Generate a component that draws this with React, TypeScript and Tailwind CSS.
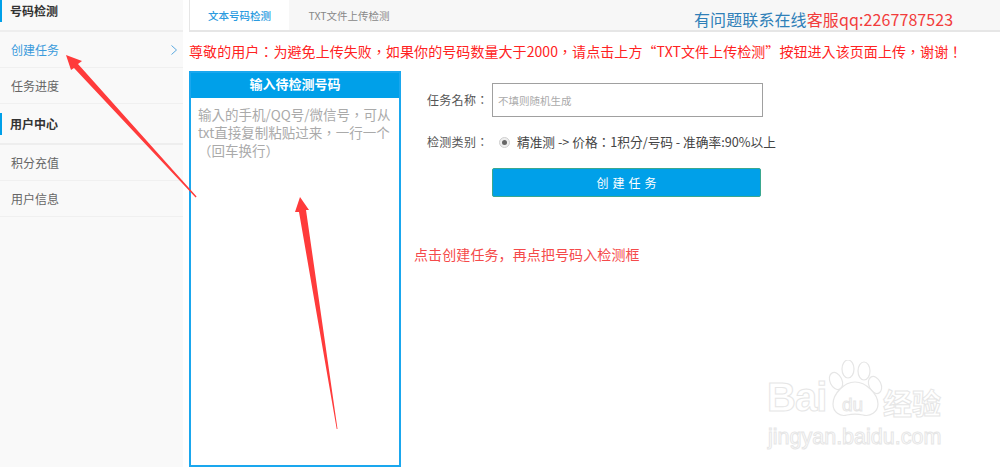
const font = '[font-family:"Noto_Sans_CJK_SC","Liberation_Sans",sans-serif]';
const fontTc = '[font-family:"Noto_Sans_CJK_TC","Liberation_Sans",sans-serif]';

function SideHead({ label, first }: { label: string; first?: boolean }) {
  return (
    <div className={`border-b-2 border-[#eeeeee] pb-[8px] ${first ? "" : "pt-[9px]"}`}>
      <div className="flex h-[22px] items-center border-l-2 border-[#00a0e9] pl-[8px] text-[12px] font-bold text-[#333333]">
        {label}
      </div>
    </div>
  );
}

function SideItem({ label, active }: { label: string; active?: boolean }) {
  return (
    <div
      className={`flex h-[36px] items-center justify-between border-b border-[#f0f0f0] pl-[11px] pr-[5px] text-[12px] ${
        active ? "text-[#3a9bdc]" : "text-[#666666]"
      }`}
    >
      {label}
      {active && (
        <svg width="8" height="12" viewBox="0 0 8 12" fill="none" stroke="#5aa9e0" strokeWidth="1">
          <path d="M1.5 1.5 6.5 6 1.5 10.5" />
        </svg>
      )}
    </div>
  );
}

function Arrows() {
  return (
    <svg className="absolute left-0 top-0" width="1000" height="467" viewBox="0 0 1000 467">
      <polygon fill="#ff3b3b" points="66,55 82,61 78,64 196.6,196.6 195.6,197.4 74,68 71,70" />
      <polygon fill="#ff3b3b" points="300,197 309,210 306,210 337.5,429 336.7,429 299,212 295,212" />
    </svg>
  );
}

function Watermark() {
  const outline = "text-white [-webkit-text-stroke:1px_#e6e6e6]";
  return (
    <div className="absolute left-[766px] top-[360px] h-[90px] w-[185px] [font-family:'Liberation_Sans',sans-serif]">
      <span className={`absolute left-[1px] top-[17px] text-[40px] font-bold leading-[40px] tracking-[-1px] ${outline}`}>Bai</span>
      <svg className="absolute left-0 top-0" width="185" height="90" viewBox="0 0 185 90" fill="#fff" stroke="#e6e6e6" strokeWidth="1.2">
        <ellipse cx="70" cy="21" rx="6" ry="9" transform="rotate(-25 70 21)" />
        <ellipse cx="82" cy="9" rx="6" ry="9" />
        <ellipse cx="98" cy="11" rx="6" ry="9" />
        <ellipse cx="109" cy="25" rx="6" ry="9" transform="rotate(-25 109 25)" />
        <path d="M67,44 C67,34 78,22 89,22 C100,22 112,34 112,44 C112,52 104,57 97,55 C92,54 86,54 81,55 C74,57 67,52 67,44z" />
      </svg>
      <span className={`absolute left-[76px] top-[33px] text-[19px] leading-[24px] ${outline}`}>du</span>
      <span className={`absolute left-[117px] top-[24px] text-[29px] font-bold leading-[36px] ${outline} ${font}`}>经验</span>
      <span className={`absolute left-[2px] top-[63px] text-[21.5px] leading-[28px] ${outline}`}>jingyan.baidu.com</span>
    </div>
  );
}

export default function App() {
  return (
    <div className={`relative flex h-[467px] w-[1000px] overflow-hidden bg-white ${font}`}>
      <aside className="w-[183px] shrink-0 bg-[#f9f9f9]">
        <SideHead label="号码检测" first />
        <SideItem label="创建任务" active />
        <SideItem label="任务进度" />
        <SideHead label="用户中心" />
        <SideItem label="积分充值" />
        <SideItem label="用户信息" />
      </aside>

      <main className="ml-[6px] flex min-w-0 flex-1 flex-col">
        <div className="flex h-[32px] shrink-0 items-stretch border-b-2 border-[#e6e6e6] bg-[#f7f7f7]">
          <div className="flex w-[100px] items-center justify-center border-l border-[#e6e6e6] bg-white pt-[1px] text-[10.5px] font-medium text-[#2b9be0]">
            文本号码检测
          </div>
          <div className="flex w-[120px] items-center justify-center pt-[1px] text-[10.5px] text-[#888888]">
            TXT文件上传检测
          </div>
          <div className="ml-[285px] flex items-end text-[16px] leading-[22px] tracking-[0.1px]">
            <span className="text-[#2f7fb8]">有问题联系在线</span>
            <span className="text-[#f23c3c]">客服qq:2267787523</span>
          </div>
        </div>

        <p className={`mt-[8px] h-[31px] whitespace-nowrap text-[14px] leading-[22px] tracking-[0.07px] text-[#ff2222] ${fontTc}`}>
          尊敬的用户：为避免上传失败，如果你的号码数量大于2000，请点击上方“TXT文件上传检测”按钮进入该页面上传，谢谢！
        </p>

        <div className="flex flex-1 min-h-0">
          <section className="flex w-[212px] shrink-0 flex-col border-2 border-[#1aa7ee]">
            <h2 className="flex h-[25px] shrink-0 items-center justify-center bg-[#00a0e9] pb-[3px] text-[13px] font-bold text-white">
              输入待检测号码
            </h2>
            <textarea
              readOnly
              className={`flex-1 resize-none px-[7px] py-[7px] text-[13.5px] leading-[18px] outline-none placeholder:text-[#aaaaaa] ${fontTc}`}
              placeholder="输入的手机/QQ号/微信号，可从txt直接复制粘贴过来，一行一个（回车换行）"
            />
          </section>

          <div className="pl-[13px]">
            <div className="pl-[13px] pt-[12px]">
              <div className="flex items-center">
                <label className={`w-[65px] text-[12px] tracking-[0.3px] text-[#555555] ${fontTc}`}>任务名称：</label>
                <input
                  readOnly
                  className="h-[34px] w-[271px] border border-[#a0a0a0] px-[5px] text-[10.5px] outline-none placeholder:text-[#aaaaaa]"
                  placeholder="不填则随机生成"
                />
              </div>
              <div className="mt-[16px] flex h-[18px] items-center">
                <label className={`w-[65px] text-[12px] tracking-[0.3px] text-[#555555] ${fontTc}`}>检测类别：</label>
                <span className="ml-[7px] flex h-[11px] w-[11px] items-center justify-center rounded-full border border-[#d0d0d0] bg-[#eeeeee]">
                  <span className="h-[5px] w-[5px] rounded-full bg-[#666666]" />
                </span>
                <span className={`ml-[7px] whitespace-nowrap text-[12.7px] text-[#444444] ${fontTc}`}>
                  精准测 -&gt; 价格：1积分/号码 - 准确率:90%以上
                </span>
              </div>
              <button className="ml-[65px] mt-[17px] flex h-[29px] w-[269px] items-center justify-center rounded-[2px] border border-[#3aa88f] bg-[#00a0e9] pl-[4px] text-[12px] tracking-[4px] text-white">
                创建任务
              </button>
            </div>
            <p className="mt-[47px] whitespace-nowrap text-[14px] leading-[20px] tracking-[0.1px] text-[#f54a4a]">
              点击创建任务，再点把号码入检测框
            </p>
          </div>
        </div>
      </main>

      <Arrows />
      <Watermark />
    </div>
  );
}
